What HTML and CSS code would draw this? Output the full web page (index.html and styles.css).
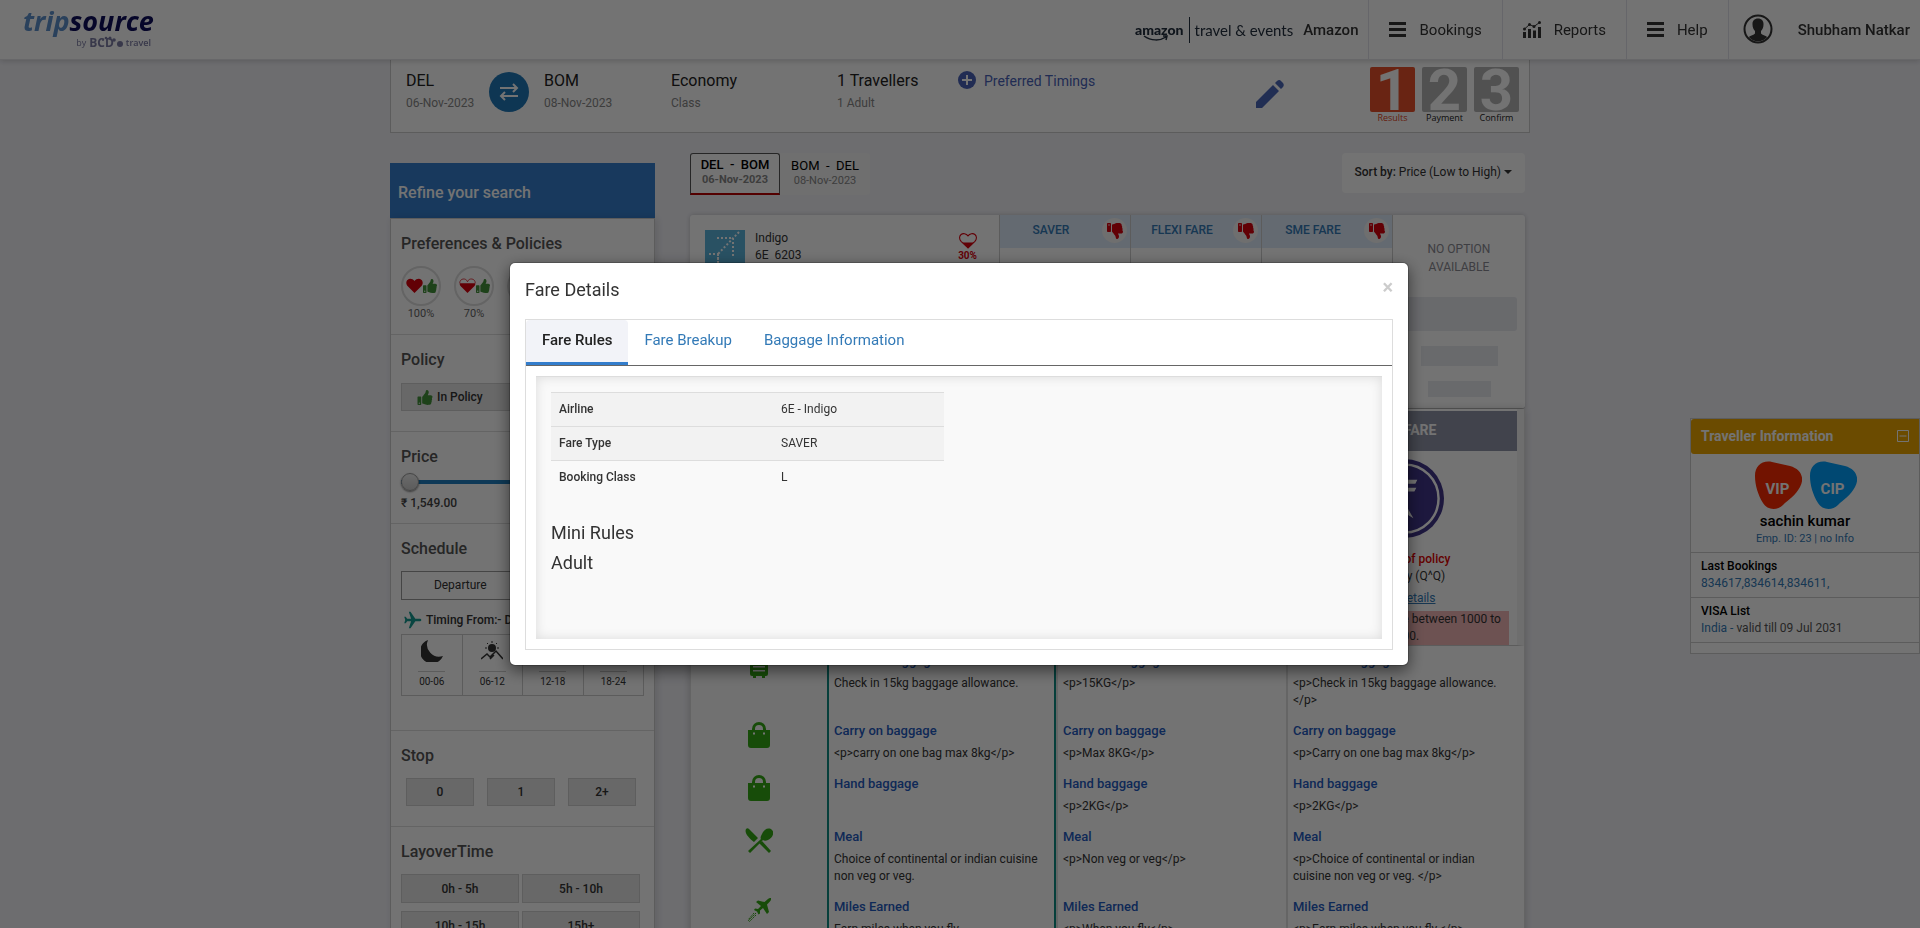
FILE: index.html
```html
<!DOCTYPE html>
<html lang="en">
<head>
<meta charset="utf-8">
<title>Tripsource - Fare Details</title>
<link rel="stylesheet" href="styles.css">
</head>
<body class="modal-open">
<svg class="sprite" aria-hidden="true">
  <symbol id="thumb" viewBox="0 0 512 512"><path d="M104 224H24c-13 0-24 11-24 24v240c0 13 11 24 24 24h80c13 0 24-11 24-24V248c0-13-11-24-24-24zM64 472c-13 0-24-11-24-24s11-24 24-24 24 11 24 24-11 24-24 24zM384 81c0 43-26 67-33 95h101c34 0 60 28 60 58 0 18-8 37-20 49 10 24 8 57-9 80 8 26 0 58-17 75 5 17 3 32-6 44-20 30-70 30-113 30h-3c-48 0-88-18-120-32-16-7-37-16-53-16-6 0-11-5-11-12V238c0-3 1-6 3-8 40-39 57-81 89-113 15-15 20-37 26-59C283 39 292 0 312 0c24 0 72 8 72 81z"/></symbol>
  <symbol id="heart" viewBox="0 0 24 22"><path d="M12 21 2.500 11.500C-.5 8 0 4 2.500 2S9.500.5 12 4c2.500-3.500 7-4 9.500-2s3 6 0 9.500z"/></symbol>
  <symbol id="menu" viewBox="0 0 17 15"><path d="M0 0h17v3H0zM0 6h17v3H0zM0 12h17v3H0z"/></symbol>
  <symbol id="bag" viewBox="0 0 24 26"><path d="M1 8h4V7a7 7 0 0 1 14 0v1h4v15a3 3 0 0 1-3 3H4a3 3 0 0 1-3-3zm7 0h8V7a4 4 0 0 0-8 0z" fill-rule="evenodd"/><path d="M6 10.500h2v2H6zM16 10.500h2v2h-2z" fill="#fff"/></symbol>
  <symbol id="plane" viewBox="0 0 24 24"><path d="M22 12c0-1-1-1.600-2.200-1.600h-5L9 2H7l2.700 8.400H5L3.300 8H1.500l1.200 4-1.200 4h1.800L5 13.600h4.700L7 22h2l5.800-8.400h5C21 13.600 22 13 22 12z"/></symbol>
</svg>

<header class="topbar">
  <a href="#" class="logo" aria-label="tripsource by BCD travel">
    <span class="logo-name"><span class="logo-trip">trip</span>source</span>
    <span class="logo-by">by <b>BCD</b>
      <svg width="6" height="10" viewBox="0 0 6 10"><circle cx="3" cy="6" r="3"/></svg>
      <i>travel</i></span>
    <svg class="logo-dots" width="16" height="6" viewBox="0 0 16 6"><circle cx="2" cy="4" r="1"/><circle cx="5" cy="2" r="1.300"/><circle cx="9" cy="2" r="1.500"/><circle cx="13" cy="4" r="1.800"/></svg>
  </a>
  <nav class="topnav">
    <div class="client">
      <span class="amazon">amazon<svg width="26" height="7" viewBox="0 0 26 7"><path d="M1 1c7 5 16 5 22 1M20 1h4l-1 4" fill="none" stroke="currentColor" stroke-width="1.500"/></svg></span>
      <span class="events">travel &amp; events</span>
      <b class="client-name">Amazon</b>
    </div>
    <a href="#" class="navitem"><svg width="17" height="15"><use href="#menu"/></svg>Bookings</a>
    <a href="#" class="navitem"><svg width="18" height="17" viewBox="0 0 18 17"><path d="M0 11h3v6H0zM5 8h3v9H5zM10 9.500h3V17h-3zM15 6h3v11h-3z"/><path d="M1.500 8 6.500 3.500 11 5.500 16.500 1.500" fill="none" stroke="currentColor"/><circle cx="1.500" cy="8" r="1.500"/><circle cx="6.500" cy="3.500" r="1.500"/><circle cx="11" cy="5.500" r="1.500"/><circle cx="16.500" cy="1.500" r="1.500"/></svg>Reports</a>
    <a href="#" class="navitem"><svg width="17" height="15"><use href="#menu"/></svg>Help</a>
    <a href="#" class="navitem user"><svg width="30" height="30" viewBox="0 0 30 30"><circle cx="15" cy="15" r="13.500" fill="none" stroke="currentColor" stroke-width="2"/><path d="M15 4.500c3.800 0 5.700 2.600 5.500 6 0 3-1 4.800-2.500 6.500v2.500c1 1.500 4.500 1.800 6.200 3.500A12 12 0 0 1 5.800 23c1.700-1.700 5.200-2 6.200-3.500V17c-1.500-1.700-2.500-3.500-2.500-6.500-.2-3.400 1.700-6 5.500-6z"/></svg><b>Shubham Natkar</b></a>
  </nav>
</header>

<main class="page">
  <section class="trip">
    <div class="trip-part from"><span>DEL</span><small>06-Nov-2023</small></div>
    <span class="swap"><svg width="20" height="18" viewBox="0 0 20 18"><path d="M1 5h17M14 1l4 4-4 4M19 13H2M6 9l-4 4 4 4" fill="none" stroke="#fff" stroke-width="2"/></svg></span>
    <div class="trip-part to"><span>BOM</span><small>08-Nov-2023</small></div>
    <div class="trip-part cabin"><span>Economy</span><small>Class</small></div>
    <div class="trip-part pax"><span>1 Travellers</span><small>1 Adult</small></div>
    <a href="#" class="timings"><svg width="18" height="18" viewBox="0 0 18 18"><circle cx="9" cy="9" r="9"/><path d="M9 4v10M4 9h10" stroke="#fff" stroke-width="2"/></svg>Preferred Timings</a>
    <button class="edit" aria-label="Edit search"><svg width="28" height="28" viewBox="0 0 28 28"><path d="M0 22 17 5l6 6L6 28H0zM19 3l2-2c1.500-1.300 3-1.300 4 0l2 2c1 1.300 1 2.500 0 4l-2 2z"/></svg></button>
    <ol class="steps">
      <li class="on"><b>1</b><span>Results</span></li>
      <li><b>2</b><span>Payment</span></li>
      <li><b>3</b><span>Confirm</span></li>
    </ol>
  </section>

  <div class="columns">
    <aside class="filters">
      <h2 class="filters-head">Refine your search</h2>
      <div class="filters-body">
        <section class="filter">
          <h3>Preferences &amp; Policies</h3>
          <div class="prefs">
            <label class="pref"><span class="ring"><svg width="17" height="16" class="red"><use href="#heart"/></svg><svg width="14" height="16" class="green"><use href="#thumb"/></svg></span>100%</label>
            <label class="pref"><span class="ring"><svg width="17" height="16" class="red" viewBox="0 0 24 22"><path d="M12 21 2.500 11.500C1 10 1 8 1 7h22c0 1 0 3-1.500 4.500z"/><path d="M1 7C1 0 10-1 12 5c2-6 11-5 11 2" fill="none" stroke="currentColor"/></svg><svg width="14" height="16" class="green"><use href="#thumb"/></svg></span>70%</label>
            <label class="pref"><span class="ring"></span>50%</label>
            <label class="pref"><span class="ring"></span>30%</label>
          </div>
        </section>
        <section class="filter policy">
          <h3>Policy</h3>
          <button class="chip wide"><svg width="16" height="15" class="green"><use href="#thumb"/></svg>In Policy</button>
        </section>
        <section class="filter price">
          <h3><label for="price">Price</label></h3>
          <input id="price" class="slider" type="range" min="1549" max="9000" value="1549">
          <p>₹ 1,549.00</p>
        </section>
        <section class="filter schedule">
          <h3>Schedule</h3>
          <div class="switch"><button>Departure</button><button>Arrival</button></div>
          <p class="timing"><svg width="20" height="20"><use href="#plane"/></svg>Timing From:- DEL</p>
          <div class="slots">
            <button><svg width="22" height="22" viewBox="0 0 22 22"><path d="M7 0A12 12 0 0 0 22 16 12 12 0 1 1 7 0z"/></svg><span>00-06</span></button>
            <button><svg width="22" height="22" viewBox="0 0 22 22"><circle cx="11" cy="8" r="4"/><path d="M0 19l6-5 3 3 6-6 7 8M9 19l4-4" fill="none" stroke="currentColor" stroke-width="1.500"/><path d="M11 1v2M4 8h2M16 8h2M6 3l1 1M16 3l-1 1" stroke="currentColor"/></svg><span>06-12</span></button>
            <button><svg width="22" height="22" viewBox="0 0 22 22"><circle cx="11" cy="11" r="6"/></svg><span>12-18</span></button>
            <button><svg width="22" height="22" viewBox="0 0 22 22"><path d="M4 14a7 7 0 0 1 14 0z"/></svg><span>18-24</span></button>
          </div>
        </section>
        <section class="filter stop">
          <h3>Stop</h3>
          <div class="stops"><button class="chip">0</button><button class="chip">1</button><button class="chip">2+</button></div>
        </section>
        <section class="filter">
          <h3>LayoverTime</h3>
          <div class="layovers"><button class="chip">0h - 5h</button><button class="chip">5h - 10h</button><button class="chip">10h - 15h</button><button class="chip">15h+</button></div>
        </section>
      </div>
    </aside>

    <section class="results">
      <div class="toolbar">
        <div class="legs">
          <button class="leg on"><span>DEL&nbsp; -&nbsp; BOM</span><small>06-Nov-2023</small></button>
          <button class="leg"><span>BOM&nbsp; -&nbsp; DEL</span><small>08-Nov-2023</small></button>
        </div>
        <button class="sort"><b>Sort by:</b> Price (Low to High) <i class="caret"></i></button>
      </div>

      <article class="flight">
        <div class="carrier">
          <svg width="40" height="40" viewBox="0 0 40 40"><path fill="#5bb4dc" d="M0 0h40v40H0z"/><path d="M34 2 13 24M12 8h16v20M4 24h9v16M13 24v16" fill="none" stroke="#fff" stroke-width="2" stroke-dasharray="2 2"/></svg>
          <div class="carrier-name">Indigo<br>6E&nbsp; 6203</div>
          <div class="score"><svg width="18" height="16" viewBox="0 0 24 22"><path d="M12 21 4 13h16z"/><path d="M12 20.500 2.500 11.500C-.5 8 0 4 2.500 2S9.500.5 12 4c2.500-3.500 7-4 9.500-2s3 6 0 9.500z" fill="none" stroke="currentColor" stroke-width="1.500"/></svg><b>30%</b></div>
        </div>
        <div class="fare"><div class="fare-head"><b>SAVER</b><span class="down"><svg width="16" height="16"><use href="#thumb"/></svg></span></div></div>
        <div class="fare"><div class="fare-head"><b>FLEXI FARE</b><span class="down"><svg width="16" height="16"><use href="#thumb"/></svg></span></div></div>
        <div class="fare"><div class="fare-head"><b>SME FARE</b><span class="down"><svg width="16" height="16"><use href="#thumb"/></svg></span></div></div>
        <div class="fare none"><p>NO OPTION AVAILABLE</p><i class="bar b1"></i><i class="bar b2"></i><i class="bar b3"></i></div>
      </article>

      <div class="details">
        <div class="offers">
          <div class="offer">
            <h4>SME FARE</h4>
            <svg width="79" height="79" viewBox="0 0 80 80"><circle cx="40" cy="40" r="40" fill="#40358a"/><circle cx="40" cy="40" r="34.500" fill="none" stroke="#fff" stroke-width="2.500"/><path d="M22 21h31l-2 4H40v4h12l-2 4H40l-3 6 12 21-5-3-9-14-10 17-4 1 12-23z" fill="#fff"/></svg>
            <b class="out">Fare out of policy</b>
            <span>Economy (Q^Q)</span>
            <a href="#">Fare Details</a>
            <p>Airlines change fee between 1000 to<br>3500.</p>
          </div>
        </div>
        <div class="benefits">
          <div class="row">
            <div class="ico"><svg width="20" height="26" viewBox="0 0 20 26"><path d="M5 4V0h10v4h2a2 2 0 0 1 2 2v16a2 2 0 0 1-2 2h-1v2h-3v-2H7v2H4v-2H3a2 2 0 0 1-2-2V6c0-1 1-2 2-2zm2 0h6V2H7z"/><path d="M4 10h12v1.500H4zM4 14h12v1.500H4zM4 18h12v1.500H4z" fill="#fff"/></svg></div>
            <div class="cell own"><h5>Check in baggage</h5><p>Check in 15kg baggage allowance.</p></div>
            <div class="cell"><h5>Check in baggage</h5><p>&lt;p&gt;15KG&lt;/p&gt;</p></div>
            <div class="cell"><h5>Check in baggage</h5><p>&lt;p&gt;Check in 15kg baggage allowance. &lt;/p&gt;</p></div>
          </div>
          <div class="row">
            <div class="ico"><svg width="24" height="26"><use href="#bag"/></svg></div>
            <div class="cell own"><h5>Carry on baggage</h5><p>&lt;p&gt;carry on one bag max 8kg&lt;/p&gt;</p></div>
            <div class="cell"><h5>Carry on baggage</h5><p>&lt;p&gt;Max 8KG&lt;/p&gt;</p></div>
            <div class="cell"><h5>Carry on baggage</h5><p>&lt;p&gt;Carry on one bag max 8kg&lt;/p&gt;</p></div>
          </div>
          <div class="row">
            <div class="ico"><svg width="24" height="26"><use href="#bag"/></svg></div>
            <div class="cell own"><h5>Hand baggage</h5></div>
            <div class="cell"><h5>Hand baggage</h5><p>&lt;p&gt;2KG&lt;/p&gt;</p></div>
            <div class="cell"><h5>Hand baggage</h5><p>&lt;p&gt;2KG&lt;/p&gt;</p></div>
          </div>
          <div class="row">
            <div class="ico"><svg width="28" height="26" viewBox="0 0 28 26"><path d="M1 1c1-1 2-1 3 0l9 9-4 4C4 10-1 5 1 1zM17 6c2-5 7-7 10-4s0 8-4 10c-2 1-4 1-5 0L5 25l-2-2L16 11c-1-1 0-3 1-5z"/><path d="m14 15 3-2 9 10-2 2z"/></svg></div>
            <div class="cell own"><h5>Meal</h5><p>Choice of continental or indian cuisine non veg or veg.</p></div>
            <div class="cell"><h5>Meal</h5><p>&lt;p&gt;Non veg or veg&lt;/p&gt;</p></div>
            <div class="cell"><h5>Meal</h5><p>&lt;p&gt;Choice of continental or indian cuisine non veg or veg. &lt;/p&gt;</p></div>
          </div>
          <div class="row">
            <div class="ico"><svg width="24" height="24" viewBox="0 0 24 24"><path d="M24 0c.5 2-1 4-4 6.500l2 7.500-2 2-4-6-3 2.500 0 3-1.500 1-1.500-3-3-1.500L8 10.500l3 .5 3-3-5-4 2-1.500 6.500 1.500C20 2 22-.5 24 0z"/><path d="m9 15-8 8M7 15l-6 7M9 17l-7 7" stroke="currentColor" stroke-dasharray="2 1"/></svg></div>
            <div class="cell own"><h5>Miles Earned</h5><p>Earn miles when you fly.</p></div>
            <div class="cell"><h5>Miles Earned</h5><p>&lt;p&gt;When you fly&lt;/p&gt;</p></div>
            <div class="cell"><h5>Miles Earned</h5><p>&lt;p&gt;Earn miles when you fly.&lt;/p&gt;</p></div>
          </div>
        </div>
      </div>
    </section>
  </div>
</main>

<aside class="traveller">
  <header><h2>Traveller Information</h2><button aria-label="Collapse"><svg width="12" height="12" viewBox="0 0 12 12"><path d="M.5.5h11v11H.5zM2.500 6h7" fill="none" stroke="#fff"/></svg></button></header>
  <div class="profile">
    <div class="badges">
      <span class="badge vip"><svg width="48" height="48" viewBox="0 0 48 48"><path d="M1 15C1 5 8-1 18 1l18 4c11 3 15 12 10 21-4 8-12 13-17 18-6 6-16 5-20-2C4 34 1 24 1 15z"/></svg><b>VIP</b></span>
      <span class="badge cip"><svg width="48" height="48" viewBox="0 0 48 48"><path d="M1 15C1 5 8-1 18 1l18 4c11 3 15 12 10 21-4 8-12 13-17 18-6 6-16 5-20-2C4 34 1 24 1 15z"/></svg><b>CIP</b></span>
    </div>
    <strong>sachin kumar</strong>
    <a href="#">Emp. ID: 23 | no Info</a>
  </div>
  <div class="fact"><b>Last Bookings</b><a href="#">834617,834614,834611,</a></div>
  <div class="fact"><b>VISA List</b><a href="#">India - <span>valid till 09 Jul 2031</span></a></div>
</aside>

<div class="overlay">
  <div class="modal" role="dialog" aria-labelledby="dlg-title">
    <div class="modal-head"><h1 id="dlg-title">Fare Details</h1><button class="close" aria-label="Close">×</button></div>
    <div class="tabbox">
      <nav class="tabs"><a href="#" class="on">Fare Rules</a><a href="#">Fare Breakup</a><a href="#">Baggage Information</a></nav>
      <div class="well">
        <table class="rules">
          <tr><th scope="row">Airline</th><td>6E - Indigo</td></tr>
          <tr><th scope="row">Fare Type</th><td>SAVER</td></tr>
          <tr><th scope="row">Booking Class</th><td>L</td></tr>
        </table>
        <h4>Mini Rules</h4>
        <h4>Adult</h4>
      </div>
    </div>
  </div>
</div>
</body>
</html>
```

FILE: styles.css
```css
* { box-sizing: border-box; }
body { margin: 0; background: #f2f2f7; color: #333; font: 14px/20px Roboto, "Noto Sans", sans-serif; }
body.modal-open { height: 100vh; overflow: hidden; }
h1, h2, h3, h4, h5, p, ol { margin: 0; padding: 0; font-weight: 500; }
b, strong, th { font-weight: 500; }
a { color: #337ab7; text-decoration: none; }
button { font: inherit; color: inherit; background: none; border: 0; padding: 0; }
svg { fill: currentColor; display: block; flex: none; }
.sprite { position: absolute; width: 0; height: 0; }
.red { color: #d9000d; }
.green { color: #43923a; }

/* Top bar */
.topbar { position: fixed; top: 0; left: 0; right: 0; z-index: 5; height: 60px; display: flex; justify-content: space-between; background: #fff; border-bottom: 1px solid #e4e4e8; box-shadow: 0 1px 6px rgba(0,0,0,.2); }
.logo { position: relative; margin: 5px 0 0 23px; color: #0e0e5c; width: 132px; }
.logo-name { display: block; font: italic 700 27px/32px "Open Sans", sans-serif; }
.logo-trip { color: #5d90cc; }
.logo-by { display: flex; align-items: center; justify-content: flex-end; gap: 3px; height: 12px; padding-right: 4px; font: 9px/12px "Open Sans", sans-serif; color: #7c7ca4; }
.logo-by b { font-size: 12px; font-weight: 700; }
.logo-by i { font-style: normal; font-weight: 600; }
.logo-dots { position: absolute; right: 38px; top: 31px; color: #7c7ca4; }
.topnav { display: flex; font-size: 15px; }
.client { display: flex; align-items: center; padding-right: 10px; color: #232f3e; }
.amazon { position: relative; font: 900 14px/18px Lato, sans-serif; padding-right: 5px; }
.amazon svg { position: absolute; left: 8px; top: 14px; }
.events { border-left: 1px solid #232f3e; padding-left: 5px; font: 15px/26px Lato, sans-serif; }
.client-name { margin-left: 10px; color: #333; }
.navitem { display: flex; align-items: center; gap: 13px; padding: 0 20px; border-left: 1px solid #e3e3ea; color: #333; }
.user { gap: 25px; padding: 0 10px 0 14px; }
.user svg { margin-top: -2px; }

/* Trip summary */
.page { width: 1140px; max-width: 100%; margin: 0 auto; }
.trip { display: flex; height: 133px; padding: 66px 10px 0 15px; background: #fff; border: 1px solid #ccc; font-size: 16px; color: #222; }
.trip-part { padding-top: 4px; }
.trip-part span, .trip-part small { display: block; }
.trip-part small { font-size: 12px; line-height: 24px; color: #888; }
.from { width: 83px; }
.swap { display: grid; place-items: center; width: 40px; height: 40px; margin: 5px 15px 0 0; border-radius: 50%; background: #1f78b8; }
.to { width: 127px; }
.cabin { width: 166px; }
.pax { width: 121px; }
.timings { display: flex; gap: 8px; height: 20px; margin-top: 4px; color: #4a63b8; font-size: 14px; }
.edit { margin-left: auto; align-self: flex-start; padding-top: 13px; color: #4a66b8; }
.steps { display: flex; gap: 7px; margin-left: 86px; list-style: none; }
.steps li { width: 45px; text-align: center; }
.steps b { display: block; height: 45px; border-radius: 2px; background: #b4b4b4; color: #fff; font: 700 58px/46px Roboto, sans-serif; }
.steps .on b { background: #e8512a; }
.steps span { display: block; font: 9px/11px "Open Sans", sans-serif; }
.steps .on span { color: #e04420; }

/* Filters */
.columns { display: flex; gap: 35px; padding: 20px 5px 0 0; }
.filters { flex: none; width: 265px; margin-top: 10px; }
.filters-head { height: 55px; padding: 2px 8px 0; background: #357fcf; color: #fff; font-size: 16px; line-height: 55px; }
.filters-body { background: #fff; border: 1px solid #ccc; box-shadow: 2px 0 8px rgba(0,0,0,.12); }
.filter { padding: 15px 10px 20px; border-bottom: 1px solid #ddd; }
.filter h3 { font-size: 16px; line-height: 20px; color: #555; }
.prefs { display: flex; gap: 13px; padding-top: 12px; margin-bottom: -8px; }
.pref { width: 40px; text-align: center; font-size: 11px; line-height: 16px; color: #666; }
.ring { display: flex; align-items: center; justify-content: center; height: 40px; border: 2px solid #ddd; border-radius: 50%; }
.chip { height: 28px; background: #e6e6e6; border: 1px solid #d0d0d0; font-size: 12px; font-weight: 500; color: #333; }
.wide { display: flex; align-items: center; gap: 4px; width: 118px; margin-top: 13px; padding-left: 15px; }
.slider { display: block; width: 238px; height: 18px; margin: 6px 0 2px; appearance: none; background: linear-gradient(#1f7fc0, #1f7fc0) center / 100% 4px no-repeat; }
.slider::-webkit-slider-thumb { appearance: none; width: 18px; height: 18px; border: 1px solid #999; border-radius: 50%; background: linear-gradient(#eee, #ccc); box-shadow: 0 1px 2px rgba(0,0,0,.5); }
.price { padding-bottom: 10px; }
.price p { font-size: 12px; color: #444; }
.schedule { padding-bottom: 34px; }
.switch { display: flex; margin-top: 12px; }
.switch button { flex: 1; height: 29px; padding: 0 3px 1px 0; border: 1px solid #999; font-size: 12px; }
.timing { display: flex; align-items: center; gap: 3px; padding: 10px 2px 4px; font-size: 12px; }
.timing svg { color: #159a90; }
.slots { display: flex; border: 1px solid #ccc; }
.slots button { display: grid; justify-items: center; flex: 1; height: 60px; padding-top: 5px; border-right: 1px solid #ccc; font-size: 10px; line-height: 20px; }
.slots button:last-child { border: 0; }
.slots span { padding: 0 1px; border-top: 1px solid #ccc; margin-top: 6px; }
.stops { display: flex; gap: 13px; padding: 12px 5px 0; }
.stops .chip { width: 68px; }
.layovers { display: grid; grid-template-columns: 118px 118px; gap: 8px 3px; padding-top: 12px; }
.layovers .chip { height: 29px; }

/* Results */
.results { flex: 1; min-width: 0; }
.toolbar { display: flex; justify-content: space-between; height: 62px; align-items: flex-start; }
.legs { display: flex; background: #f5f5f5; border-radius: 3px; }
.leg { width: 90px; height: 42px; padding-bottom: 3px; font-size: 13px; color: #000; }
.leg span, .leg small { display: block; line-height: 15px; }
.leg small { font-size: 11px; color: #888; }
.leg.on { background: #fff; border: 1px solid #555; border-bottom: 2px solid #b00; border-radius: 3px 3px 0 0; font-weight: 500; }
.leg.on small { font-weight: 700; }
.sort { height: 40px; padding: 0 13px 2px; background: #fff; border-radius: 4px; font-size: 12px; }
.caret { display: inline-block; border: 4px solid transparent; border-top: 4px solid #333; border-bottom: 0; vertical-align: 2px; }
.flight { display: grid; grid-template-columns: 309px repeat(3, 131px) 1fr; height: 194px; background: #fff; border-bottom: 1px solid #bbb; border-radius: 3px; box-shadow: 0 0 5px rgba(0,0,0,.2); }
.carrier { display: flex; padding: 15px 22px 0 15px; font-size: 12px; line-height: 17px; }
.carrier-name { margin-left: 10px; flex: 1; }
.score { text-align: center; font-size: 10px; line-height: 14px; color: #d9000d; padding-top: 3px; }
.score b { font-weight: 700; }
.score svg { margin: 0 auto; }
.fare { border-left: 1px solid #ccc; }
.fare-head { display: flex; align-items: center; height: 33px; padding: 0 3px 0 0; background: #deebfa; color: #337ab7; font-size: 12px; text-align: center; }
.fare-head b { flex: 1; line-height: 30px; padding-bottom: 3px; }
.down { display: grid; place-items: center; width: 25px; height: 25px; margin-bottom: 2px; border-radius: 50%; background: #f5f5f5; color: #d9000d; }
.down svg { transform: scaleY(-1); }
.none { padding: 25px 8px 0; text-align: center; color: #8a8a92; font-size: 12px; line-height: 18px; }
.none p { padding: 0 24px; font-weight: 400; }
.bar { display: block; margin: 0 auto; background: #e9eaf0; }
.b1 { height: 34px; margin-top: 21px; border-radius: 3px; }
.b2 { width: 77px; height: 20px; margin-top: 15px; }
.b3 { width: 63px; height: 16px; margin-top: 15px; }
.details { background: #fff; border: 1px solid #ddd; border-top: 0; box-shadow: 0 0 8px rgba(0,0,0,.2); }
.offers { display: flex; justify-content: flex-end; padding-top: 2px; height: 237px; border-right: 7px solid #f4f4f4; border-bottom: 1px solid #ccc; }
.offer { display: flex; flex-direction: column; align-items: center; width: 226px; font-size: 12px; line-height: 17px; }
.offer h4 { width: 100%; height: 40px; margin-bottom: 8px; background: #9196a8; color: #fff; font-size: 14px; font-weight: 700; line-height: 39px; text-align: center; }
.out { margin-top: 13px; color: #e00000; }
.offer a { margin: 5px 0 4px; text-decoration: underline; }
.offer p { width: 210px; background: #f2b6b6; text-align: center; font-weight: 400; }
.benefits { padding-top: 5px; }
.row { display: grid; grid-template-columns: 136px 229px 230px 1fr; }
.ico { display: flex; justify-content: center; color: #34a814; padding-top: 1px; background: #fafafa; }
.cell { padding: 0 20px 12px 5px; border-left: 2px solid #e0e0e0; font-size: 12px; line-height: 17px; }
.own { padding-right: 6px; border-left: 2px solid #0e8c84; border-right: 2px solid #0e8c84; }
.cell h5 { font-size: 13px; line-height: 20px; margin-bottom: 4px; color: #1f5bc0; }
.cell p { font-weight: 400; }

/* Traveller panel */
.traveller { position: fixed; right: 0; top: 418px; width: 230px; padding-bottom: 10px; background: #fff; border: 1px solid #ccc; }
.traveller header { display: flex; justify-content: space-between; align-items: center; height: 35px; padding: 0 10px 1px; background: #eda600; border-radius: 3px 0 0 3px; color: #fff; }
.traveller h2 { font-size: 14px; font-weight: 700; }
.profile { display: grid; justify-items: center; padding-top: 7px; }
.badges { display: flex; gap: 7px; }
.badge { display: grid; place-items: center; }
.badge > * { grid-area: 1 / 1; }
.badge b { color: #fff; font-size: 15px; font-weight: 700; padding-top: 7px; }
.vip { color: #fc2c00; }
.cip { color: #00a0fc; }
.badge svg { fill: currentColor; }
.profile strong { color: #000; font-size: 15px; line-height: 24px; }
.profile a { font-size: 11px; line-height: 12px; padding-bottom: 7px; }
.fact { padding: 5px 10px; border-top: 1px solid #ccc; font-size: 12px; line-height: 17px; }
.fact:last-child { border-bottom: 1px solid #ccc; }
.fact b, .fact a { display: block; }
.fact b { color: #000; }
.fact span { color: #555; }

/* Modal */
.overlay { position: fixed; inset: 0; z-index: 10; padding: 262px 2px 0 0; background: rgba(0,0,0,.55); }
.modal { width: 900px; max-width: 100%; margin: 0 auto; padding: 15px; background: #fff; border: 1px solid rgba(0,0,0,.2); background-clip: padding-box; border-radius: 6px; box-shadow: 0 5px 15px rgba(0,0,0,.5); }
.modal-head { display: flex; justify-content: space-between; height: 41px; padding-top: 1px; }
.modal-head h1 { font-size: 18px; line-height: 22px; font-weight: 400; }
.close { font-size: 20px; line-height: 16px; font-weight: 700; color: #ccc; align-self: flex-start; }
.tabbox { border: 1px solid #ddd; }
.tabs { display: flex; border-bottom: 1px solid #666; }
.tabs a { height: 45px; padding: 10px 16px 0; font-size: 15px; }
.tabs .on { background: #f2f3f8; color: #222; font-weight: 500; border-bottom: 3px solid #337dcc; border-radius: 4px 4px 0 0; }
.well { min-height: 263px; margin: 10px; padding: 15px; background: #f9f9f9; border-top: 1px solid #ddd; box-shadow: inset 0 0 12px rgba(0,0,0,.12); }
.rules { width: 393px; border-collapse: collapse; margin-bottom: 28px; font-size: 12px; line-height: 17px; text-align: left; }
.rules th, .rules td { padding: 8px; height: 34px; border-top: 1px solid #ddd; }
.rules th { width: 222px; }
.rules tr:nth-child(-n+2) { background: #f2f2f2; }
.well h4 { font-size: 18px; line-height: 20px; margin-bottom: 10px; font-weight: 400; }
```
